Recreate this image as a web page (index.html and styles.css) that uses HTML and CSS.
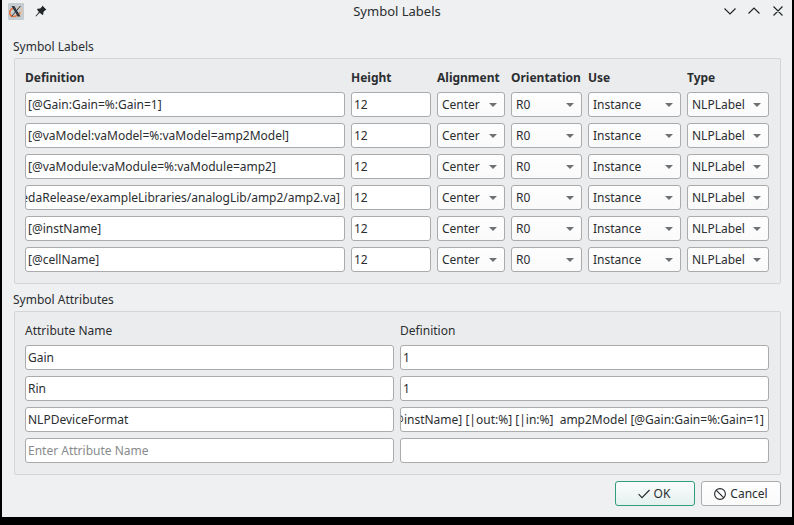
FILE: index.html
```html
<!DOCTYPE html>
<html lang="en">
<head>
<meta charset="utf-8">
<title>Symbol Labels</title>
<link rel="stylesheet" href="styles.css">
</head>
<body>
<main class="dialog">
  <header class="titlebar">
    <svg class="app-icon" width="16" height="17" viewBox="0 0 16 17"><rect width="16" height="17" rx="1" fill="#c6cdd2"/><path d="M5 5.500C1 6.500 .8 12 4 13.200c3 .8 7-1 8-4" fill="none" stroke="#e4703f" stroke-width="1.500"/><path d="M9 5c5-1.500 6.500 3.500 4 6.500-1 1.500-3 2-4 1.500" fill="none" stroke="#e5c3a0" stroke-width="1.300"/><path d="M3.500 3H6.300L12.500 13.500H9.700z" fill="#30363b"/><path d="M12.500 3L3.500 13.500" stroke="#30363b"/></svg>
    <svg class="pin" width="12" height="12" viewBox="0 0 12 12"><path d="M7.300.6L11.400 4.700 10.200 5.200 8.400 7 8.300 9.600 7.500 10 4.700 7.800 1 11.400.5 11 3.900 7.100 2 4.500 2.500 3.700 5.200 3.600 7 1.800z" fill="#232629"/></svg>
    <h1 class="title">Symbol Labels</h1>
    <svg class="controls" width="60" height="12" viewBox="0 0 60 12" fill="none" stroke="#232629" stroke-width="1.150"><path d="M1.500 3.500L7 9l5.500-5.500M25.500 8.500L31 3l5.500 5.500M50.500 1.500l9 9M59.500 1.500l-9 9"/></svg>
  </header>
  <h2 class="caption">Symbol Labels</h2>
  <section class="group labels" id="labels">
    <b>Definition</b><b>Height</b><b>Alignment</b><b>Orientation</b><b>Use</b><b>Type</b>
  </section>
  <h2 class="caption">Symbol Attributes</h2>
  <section class="group attributes">
    <span>Attribute Name</span><span>Definition</span>
    <div class="field">Gain</div><div class="field">1</div>
    <div class="field">Rin</div><div class="field">1</div>
    <div class="field">NLPDeviceFormat</div><div class="field scrolled"><span>@instName] [|out:%] [|in:%]&nbsp; amp2Model [@Gain:Gain=%:Gain=1]</span></div>
    <div class="field placeholder">Enter Attribute Name</div><div class="field"></div>
  </section>
  <footer class="actions">
    <button class="ok"><svg width="12" height="12" viewBox="0 0 12 12"><path d="M.6 6.200L4 9.600 11.500 2" fill="none" stroke="#232629" stroke-width="1.100"/></svg>OK</button>
    <button><svg width="12" height="12" viewBox="0 0 12 12"><g fill="none" stroke="#232629" stroke-width="1.100"><circle cx="6" cy="6" r="5.400"/><path d="M2.200 2.200l7.600 7.600"/></g></svg>Cancel</button>
  </footer>
</main>
<script src="labels.js"></script>
</body>
</html>
```
FILE: styles.css
```css
* { box-sizing: border-box; }
body {
  margin: 0;
  height: 525px;
  padding: 0 2px 8px;
  background: #000;
  font: 13px/18px "Noto Sans", sans-serif;
  color: #2b2e31;
  overflow: hidden;
}
.dialog { height: 517px; background: #eff0f1; padding: 0 11px 0 12px; }
.titlebar { display: flex; align-items: center; height: 23px; margin: 0 -9px 0 -6px; position: relative; }
.app-icon { margin-top: -1px; }
.pin { margin: -2px 0 0 11px; }
.title { position: absolute; left: 0; right: 0; top: 2px; margin: 0; text-align: center; font-size: 13px; font-weight: 400; line-height: 18px; padding-right: 4px; }
.controls { margin: -1px 7px 0 auto; }
.caption { margin: 0 0 0 -1px; font-size: 12px; font-weight: 400; line-height: 17px; }
.titlebar + .caption { padding-top: 15px; }
.caption { height: 35px; }
.group { border: 1px solid #d3d5d6; border-radius: 2px; background: #ebecee; padding: 10px 11px 0 10px; display: grid; font-size: 12px; line-height: 18px; }
.labels { height: 226px; grid-template-columns: 320px 80px 68px 71px 93px 82px; column-gap: 6px; grid-template-rows: 17px repeat(6, 25px); row-gap: 6px; }
.labels + .caption { height: 27px; padding-top: 7px; }
.attributes { height: 164px; grid-template-columns: 369px 369px; gap: 6px; grid-template-rows: 17px repeat(4, 25px); }
.field, .combo { height: 25px; border: 1px solid #a9abac; border-radius: 3px; background: #fff; padding: 0 2px; line-height: 24px; white-space: nowrap; overflow: hidden; }
.combo { background: linear-gradient(#fefefe, #fafafa); padding: 0 7px 0 4px; display: flex; justify-content: space-between; align-items: center; }
.combo::after { content: ""; border: 4px solid transparent; border-top-color: #6e7173; border-bottom: 0; }
.scrolled { display: flex; justify-content: flex-end; padding: 0 4px 0 0; }
.placeholder { color: #888b8d; }
.actions { display: flex; justify-content: flex-end; gap: 6px; padding-top: 6px; }
button { width: 80px; height: 25px; padding: 0; display: flex; align-items: center; justify-content: center; gap: 4px; border: 1px solid #a9abac; border-radius: 3px; background: linear-gradient(#fefefe, #fafafa); color: #2b2e31; font: 12px/18px "Noto Sans", sans-serif; }
.ok { padding-right: 2px; border-color: #2f9d7e; background: linear-gradient(#fafcfc, #e4f1ef); }
```
FILE: labels.js
```js
const definitions = [
  "[@Gain:Gain=%:Gain=1]",
  "[@vaModel:vaModel=%:vaModel=amp2Model]",
  "[@vaModule:vaModule=%:vaModule=amp2]",
  "edaRelease/exampleLibraries/analogLib/amp2/amp2.va]",
  "[@instName]",
  "[@cellName]"
];
const grid = document.getElementById("labels");
function cell(className, text) {
  const el = document.createElement("div");
  el.className = className;
  const span = document.createElement("span");
  span.textContent = text;
  el.append(span);
  grid.append(el);
}
for (const text of definitions) {
  cell(text.startsWith("[") ? "field" : "field scrolled", text);
  cell("field", "12");
  for (const value of ["Center", "R0", "Instance", "NLPLabel"]) cell("combo", value);
}
```
